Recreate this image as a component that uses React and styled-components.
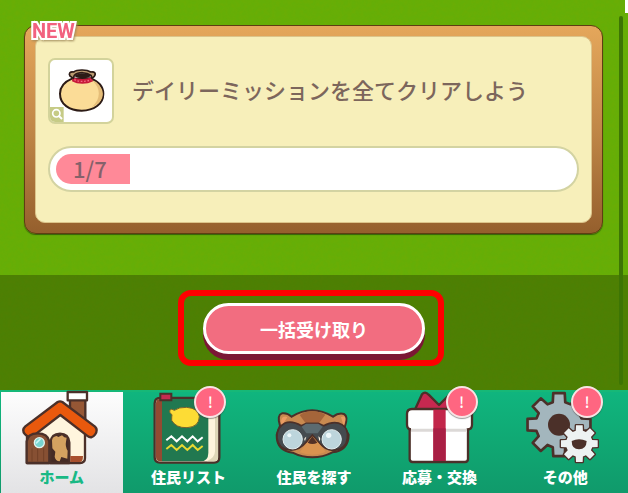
import React from "react";
import styled, { createGlobalStyle } from "styled-components";

const GlobalStyle = createGlobalStyle`
  * {
    box-sizing: border-box;
  }
  body {
    margin: 0;
    font-family: "Noto Sans CJK JP", "Noto Sans", sans-serif;
  }
`;

const Page = styled.div`
  position: relative;
  min-height: 100vh;
  display: flex;
  flex-direction: column;
  background: #65ae07;
`;

const Grass = styled.svg`
  position: absolute;
  inset: 0;
  width: 100%;
  height: 100%;
  opacity: 0.25;
  pointer-events: none;
`;

const Corner = styled.div`
  position: absolute;
  top: 0;
  right: 0;
  width: 3px;
  height: 13px;
  background: #fff;
`;

const ScrollThumb = styled.div`
  position: absolute;
  top: 16px;
  right: 5px;
  bottom: 108px;
  width: 4px;
  border-radius: 2px;
  background: #3d7504;
`;

const Missions = styled.main`
  position: relative;
  flex: 1;
  padding: 25px 25px 41px 24px;
`;

const Card = styled.section`
  position: relative;
  padding: 10px;
  border: 1px solid #5f3d12;
  border-radius: 12px;
  background: linear-gradient(#e5a75b, #c08747 50%, #955f2d);
  box-shadow: 0 1px 1px #35600a;
`;

const CardBody = styled.div`
  display: flex;
  flex-direction: column;
  gap: 22px;
  padding: 21px 12px 30px;
  border: 1px solid #dcc48a;
  border-radius: 10px;
  background: #f7efba;
`;

const NewTag = styled.span`
  position: absolute;
  top: -6px;
  left: 7px;
  color: #f2617f;
  font: 700 20px/22px Roboto, sans-serif;
  -webkit-text-stroke: 4px #fff;
  paint-order: stroke fill;
  filter: drop-shadow(1px 1px 1px #a08a5a);
`;

const Mission = styled.div`
  display: flex;
  align-items: center;
  gap: 18px;
`;

const Thumb = styled.button`
  position: relative;
  flex: none;
  width: 66px;
  height: 66px;
  padding: 0;
  overflow: hidden;
  border: 2px solid #d3d39b;
  border-radius: 7px;
  background: #fff;

  svg {
    display: block;
  }
`;

const MissionTitle = styled.h2`
  margin: 0 0 4px;
  color: #7c665c;
  font-size: 22px;
  font-weight: 500;
  line-height: 32px;
`;

const Track = styled.div`
  height: 46px;
  padding: 6px;
  border: 2px solid #d3d3a2;
  border-radius: 23px;
  background: #fff;
`;

const Fill = styled.div`
  display: flex;
  align-items: center;
  height: 30px;
  padding: 0 0 2px 17px;
  border-radius: 15px 0 0 15px;
  background: #ff8998;
  color: #85616a;
  font-size: 22px;
  font-weight: 500;
  line-height: 28px;
`;

const ActionBar = styled.div`
  position: relative;
  display: flex;
  justify-content: center;
  padding: 15px 6px 24px 0;
  background: rgba(32, 48, 0, 0.36);
`;

const Highlight = styled.div`
  padding: 7px 13px 6px 19px;
  border: 6px solid #fe0000;
  border-radius: 13px;
`;

const ClaimButton = styled.button`
  display: block;
  width: 222px;
  height: 51px;
  padding: 0;
  border: 3px solid #fff;
  border-radius: 26px;
  background: #f26d80;
  box-shadow: 0 6px 0 #7b1735;
  color: #fff;
  font: 700 18px/44px "Noto Sans CJK JP", sans-serif;
`;

const Nav = styled.nav`
  position: relative;
  display: grid;
  grid-template-columns: repeat(5, 1fr);
  height: 103px;
  border-top: 2px solid #16b878;
  background: linear-gradient(#10b57e, #10a873 50%, #109a6b);
`;

const Tab = styled.a`
  position: relative;
  display: flex;
  flex-direction: column;
  align-items: center;
  margin: ${(p) => (p.$active ? "0 3px 0 1px" : "0")};
  background: ${(p) => (p.$active ? "linear-gradient(#fdfdfd, #e3e3e5)" : "none")};
  color: ${(p) => (p.$active ? "#19b985" : "#fff")};
  font-size: 15px;
  font-weight: 900;
  line-height: 22px;
  text-decoration: none;

  svg {
    margin-top: -2px;
    overflow: visible;
  }
`;

const Badge = styled.span`
  position: absolute;
  top: -6px;
  left: calc(50% + 6px);
  width: 32px;
  height: 32px;
  border: 2px solid #f8e4e4;
  border-radius: 50%;
  background: #ff6681;
  box-shadow: 0 1px 1px rgba(60, 60, 60, 0.5);
  color: #fff;
  font-size: 15px;
  font-weight: 500;
  line-height: 27px;
  text-align: center;
`;

const INK = "#4b3029";

const PouchIcon = () => (
  <svg width="62" height="62" viewBox="0 0 186 186" aria-hidden="true">
    <path
      d="M66 56C42 66 30 82 30 101c0 32 28 51 65 51s65-20 65-51c0-20-14-38-38-46z"
      fill="#fbdc97"
      stroke="#2c1b16"
      strokeWidth="6"
    />
    <path d="M128 62c24 22 26 54-2 79 48-19 38-65 2-79z" fill="#e5bd78" />
    <path d="M68 50c14 9 42 9 58 0l3 14c-18 10-46 10-63 0z" fill="#c71939" />
    <path d="M73 59c14 7 35 7 51 0" fill="none" stroke="#f36b83" strokeWidth="4" strokeDasharray="5 5" />
    <path
      d="M60 48c-5-8 0-14 11-12 9-7 38-9 51 0 12-2 17 4 11 13l-7 6-3-9c-13-10-37-11-50 0l-3 9z"
      fill="#bd9d72"
      stroke="#2c1b16"
      strokeWidth="5"
      strokeLinejoin="round"
    />
    <path d="M73 49c6-12 44-13 50-1-13 9-36 9-50 1z" fill="#2c1b16" />
    <path d="M0 141h41v45H0z" fill="#c6cb86" />
    <circle cx="19" cy="160" r="11" fill="none" stroke="#fff" strokeWidth="5" />
    <path d="M27 168l9 9" stroke="#fff" strokeWidth="6" />
  </svg>
);

const HomeIcon = () => (
  <svg width="80" height="76" viewBox="67 30 240 228" aria-hidden="true">
    <g stroke={INK} strokeWidth="7" strokeLinejoin="round">
      <path d="M211 58h46v70l-46-35z" fill="#965735" />
      <path d="M204 36h58v25h-58z" fill="#fff" />
      <path d="M82 160l98-75 76 65v84q0 15-15 15H82z" fill="#fff5dd" />
      <path
        d="M174 66q7-4 14 0l98 74q10 10 0 24t-24 3l-80-62-80 62q-15 9-26-4t1-24z"
        fill="#e9590d"
      />
      <path d="M152 249v-61q3-27 29-27t28 27v61z" fill="#452b25" />
      <path d="M81 249v-65q3-24 33-24t35 24v65z" fill="#875033" />
    </g>
    <path d="M212 228h38q0 18-10 18h-28z" fill="#a9502e" />
    <path
      d="M157 181q2-12 14-13l5 3 11-5 7 6 7 1-2 12q-3 14 5 27l-1 24-18-5-5 13q-13-2-15-14l2-15-9-10z"
      fill="#d5a260"
    />
    <path d="M97 205v40M114 207v38M132 205v40" stroke="#724027" strokeWidth="3" />
    <circle cx="119" cy="188" r="15" fill="#78d4d0" stroke="#e4f2ec" strokeWidth="4" />
    <path d="M109 190l14-14" stroke="#c8f4f2" strokeWidth="5" />
  </svg>
);

const BookIcon = () => (
  <svg width="80" height="76" viewBox="84 30 240 228" aria-hidden="true">
    <path
      d="M120 54h162q16 0 16 16v162q0 16-16 16H120q-16 0-16-16V70q0-16 16-16z"
      fill="#fff4dc"
      stroke={INK}
      strokeWidth="7"
    />
    <path d="M285 100h9v132q0 12-12 12h-22q25-10 25-30z" fill="#dfd6b7" />
    <path d="M126 57h139v161q0 26-24 26H126z" fill="#217850" />
    <path d="M126 57h-7q-11 0-11 13v161q0 13 13 13h5z" fill="#934a32" />
    <path d="M121 41h33v20h-33z" fill="#c52b50" stroke={INK} strokeWidth="6" />
    <path
      d="M149 91q5-7 14 0 14-10 37-9 36 3 38 28-1 31-37 33-34 1-46-22 0-12 1-17-9-5-7-13z"
      fill="#fddc35"
      stroke="#77632d"
      strokeWidth="3"
    />
    <path
      d="M139 181l15-12 16 15 16-15 16 15 16-15 15 15 15-12"
      fill="none"
      stroke="#fff"
      strokeWidth="6"
    />
    <path
      d="M139 207l15-12 16 15 16-15 16 15 16-15 15 15 15-12"
      fill="none"
      stroke="#e7d932"
      strokeWidth="6"
    />
  </svg>
);

const SearchIcon = () => (
  <svg width="80" height="76" viewBox="72 30 240 228" aria-hidden="true">
    <path
      d="M90 137q-10-32 6-37 15-3 29 10 61-39 124 0 17-13 33-8 14 7 2 40l12 22q0 47-49 53-28 15-60 15t-59-14q-48-5-48-53z"
      fill="#c98a50"
      stroke={INK}
      strokeWidth="6"
    />
    <path d="M149 105q36-23 77-1l-18 24h-42z" fill="#a5653a" />
    <path d="M99 111q8-4 13 1l-17 26q-5-20 4-27zM273 112q8-6 13 1 2 10-5 24z" fill="#eb9c63" />
    <path
      d="M104 130q20-10 50 7l15-7h36l16 7q33-17 55-3 20 13 16 41-3 33-41 36-25 1-45-24l-19-22-19 22q-20 25-49 23-35-3-38-37-2-30 23-43z"
      fill="#454b4f"
      stroke={INK}
      strokeWidth="5"
    />
    <path d="M155 140l13-9h37l13 9-15 20h-34z" fill="#5c6b70" />
    <path d="M169 170q-10 5-4 13zM205 169q10 6 3 15z" fill="#fff3e2" />
    <path d="M187 169q18 18 40 47-39 16-78 1 23-30 38-48z" fill="#d99350" />
    <path d="M187 169l15 19q-15 8-29 0z" fill="#523026" />
    <g fill="#bdd5dc" stroke="#e4eff0" strokeWidth="3">
      <circle cx="128" cy="178" r="29" />
      <circle cx="245" cy="178" r="29" />
    </g>
    <g fill="#eff9fb">
      <circle cx="118" cy="166" r="6" />
      <circle cx="236" cy="166" r="8" />
    </g>
  </svg>
);

const GiftIcon = () => (
  <svg width="80" height="76" viewBox="75 30 240 228" aria-hidden="true">
    <g stroke={INK} strokeWidth="7" strokeLinejoin="round">
      <path
        d="M119 91l22-48q9-11 20 1l31 31 30-30q12-12 22 1l22 47z"
        fill="#c72850"
      />
      <path d="M104 145h175v92q0 9-9 9H113q-9 0-9-9z" fill="#fff" />
      <path
        d="M111 87h165q15 0 15 15v32q0 14-14 14H110q-14 0-14-14v-32q0-15 15-15z"
        fill="#fff"
      />
    </g>
    <path d="M108 135h167v22H108z" fill="#fff" />
    <path d="M108 151h167" stroke="#dcd9d7" strokeWidth="9" />
    <path d="M175 89h37v154h-37z" fill="#c2264a" />
    <path d="M175 145h37v98h-37z" fill="#a91f44" />
  </svg>
);

// Eight-toothed wheel outline; the first tooth points straight up.
const gearPath = (cx, cy, outer, inner) => {
  const points = [];
  for (let i = 0; i < 8; i++) {
    const mid = (i * Math.PI) / 4 - Math.PI / 2;
    [
      [-0.27, inner],
      [-0.18, outer],
      [0.18, outer],
      [0.27, inner],
    ].forEach(([turn, r]) => {
      const x = cx + r * Math.cos(mid + turn);
      const y = cy + r * Math.sin(mid + turn);
      points.push(`${x.toFixed(1)} ${y.toFixed(1)}`);
    });
  }
  return `M${points.join("L")}Z`;
};

const GearsIcon = () => (
  <svg width="80" height="76" viewBox="78 30 240 228" aria-hidden="true">
    <g stroke={INK} strokeWidth="8" strokeLinejoin="round">
      <path d={gearPath(180, 134, 96, 70)} fill="#a3b6bd" />
      <path d={gearPath(241, 191, 56, 40)} fill="#edf2f2" />
    </g>
    <circle cx="180" cy="134" r="33" fill={INK} />
    <path d={gearPath(241, 191, 56, 40)} fill="#edf2f2" />
    <path d="M218 183q22-10 45 0-1 25-23 25t-22-25z" fill={INK} />
  </svg>
);

const tabs = [
  { label: "ホーム", Icon: HomeIcon, active: true },
  { label: "住民リスト", Icon: BookIcon, badge: true },
  { label: "住民を探す", Icon: SearchIcon },
  { label: "応募・交換", Icon: GiftIcon, badge: true },
  { label: "その他", Icon: GearsIcon, badge: true },
];

const mission = { title: "デイリーミッションを全てクリアしよう", done: 1, total: 7 };

const App = () => {
  const { title, done, total } = mission;
  return (
    <>
      <GlobalStyle />
      <Page>
        <Grass aria-hidden="true">
          <filter id="grass">
            <feTurbulence type="fractalNoise" baseFrequency="0.25" numOctaves="2" seed="4" />
            <feColorMatrix type="matrix" values="0 0 0 0 0.2 0 0 0 0 0.4 0 0 0 0 0 2 0 0 0 -0.7" />
          </filter>
          <rect width="100%" height="100%" filter="url(#grass)" />
        </Grass>
        <Missions>
          <Card>
            <CardBody>
              <Mission>
                <Thumb type="button" aria-label={title}>
                  <PouchIcon />
                </Thumb>
                <MissionTitle>{title}</MissionTitle>
              </Mission>
              <Track
                role="progressbar"
                aria-label={title}
                aria-valuenow={done}
                aria-valuemin={0}
                aria-valuemax={total}
              >
                <Fill style={{ width: `${(done / total) * 100}%` }}>
                  {done}/{total}
                </Fill>
              </Track>
            </CardBody>
            <NewTag>NEW</NewTag>
          </Card>
        </Missions>
        <ActionBar>
          <Highlight>
            <ClaimButton type="button">一括受け取り</ClaimButton>
          </Highlight>
        </ActionBar>
        <Nav>
          {tabs.map(({ label, Icon, active, badge }) => (
            <Tab key={label} href="#" $active={active} aria-current={active ? "page" : undefined}>
              <Icon />
              {label}
              {badge && <Badge>!</Badge>}
            </Tab>
          ))}
        </Nav>
        <ScrollThumb />
        <Corner />
      </Page>
    </>
  );
};

export default App;
